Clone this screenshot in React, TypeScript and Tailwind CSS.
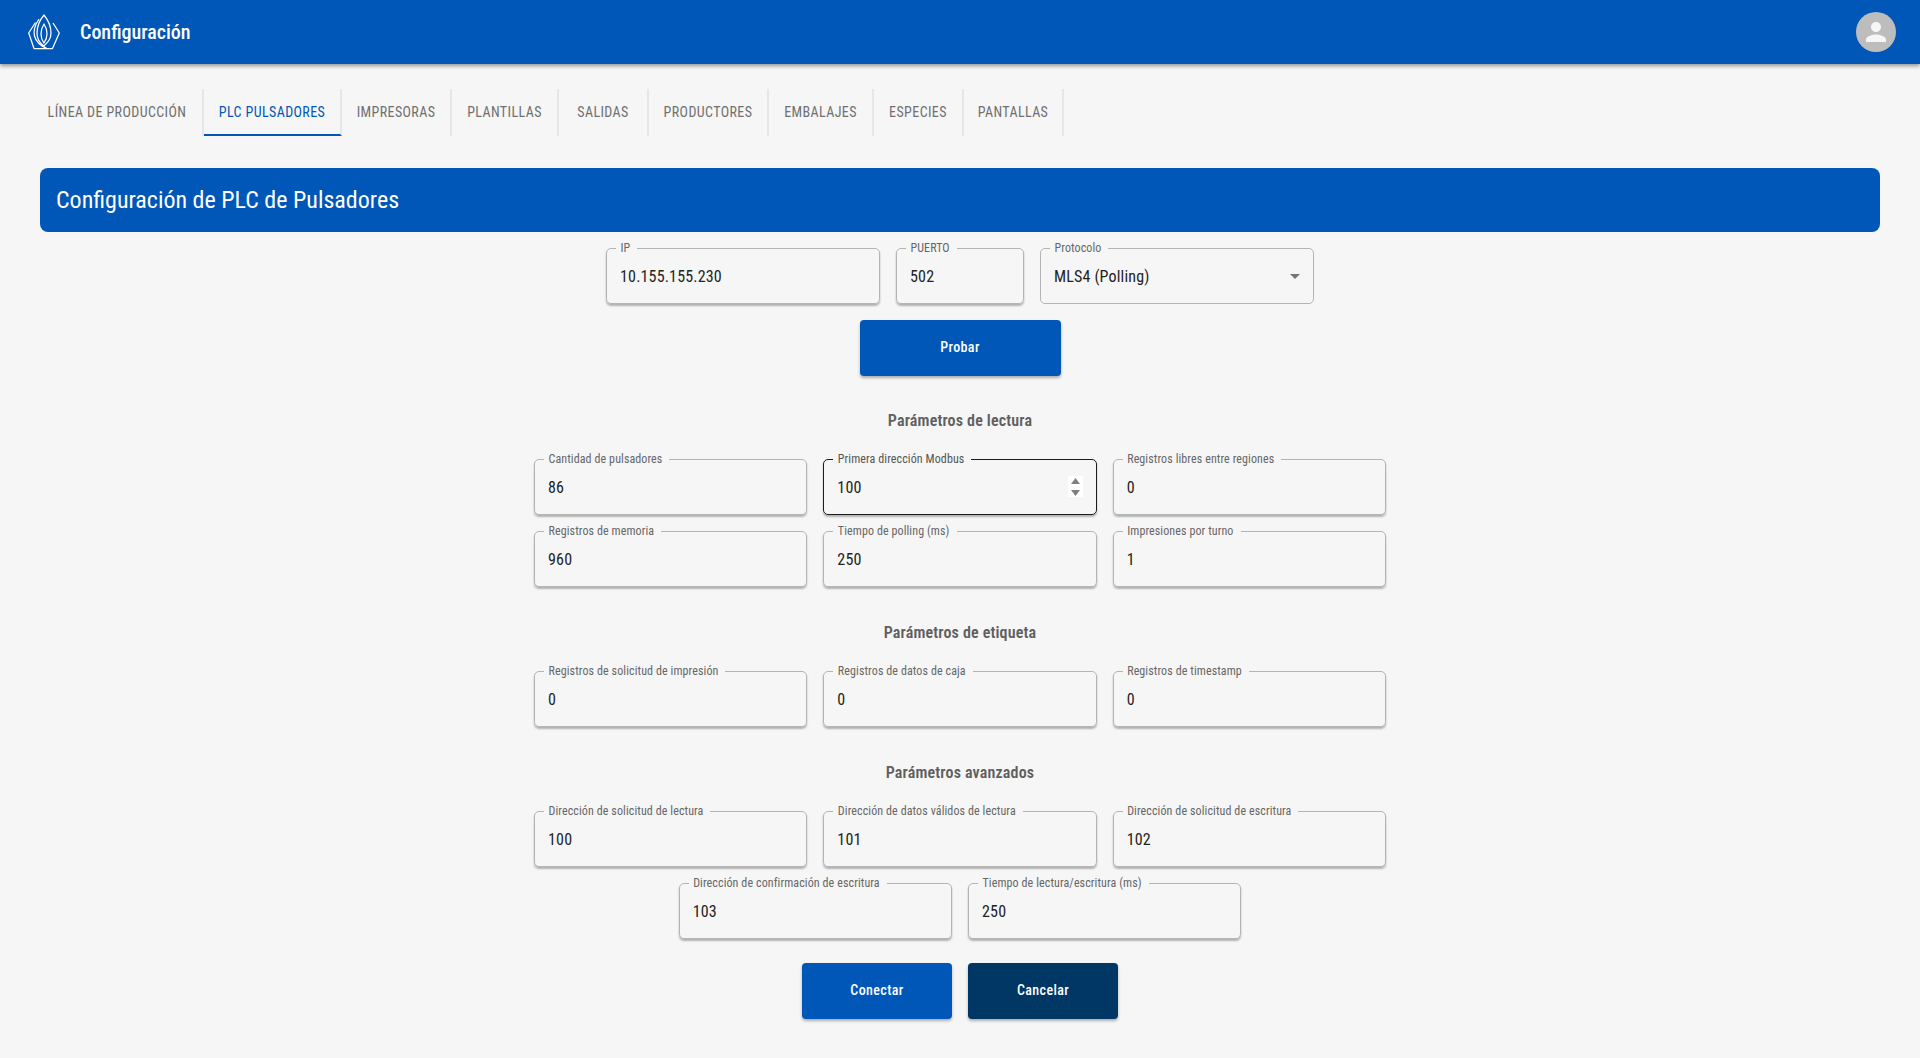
import React from "react";

const tabs = [
  { label: "LÍNEA DE PRODUCCIÓN", width: "w-[172px]" },
  { label: "PLC PULSADORES", width: "w-[138px]", active: true },
  { label: "IMPRESORAS", width: "w-[110px]" },
  { label: "PLANTILLAS", width: "w-[107px]" },
  { label: "SALIDAS", width: "w-[90px]" },
  { label: "PRODUCTORES", width: "w-[120px]" },
  { label: "EMBALAJES", width: "w-[105px]" },
  { label: "ESPECIES", width: "w-[90px]" },
  { label: "PANTALLAS", width: "w-[100px]" },
];

function Logo() {
  return (
    <svg viewBox="0 0 32 36" className="h-9 w-8" fill="none" stroke="white" strokeWidth="1.25" strokeLinejoin="round">
      <path d="M7.5 8.5 0.7 19 6 34.5H24.5L31.3 19 25 9" />
      <path d="M16 1C11 7 9 13 9 19C9 26 13 30 16 32C20 28 23 25 23 19C23 13 20 6 16 1Z" />
      <path d="M16 10C13.5 14 13 17 13 20C13 24 14.5 27 16 29C18 26 19 23 19 20C19 17 18 13 16 10Z" />
      <path d="M11 5C7 11 5 16 6.5 22C8 28 13 32 19 34.5" />
    </svg>
  );
}

function Field({ label, value, width = "w-[273.33px]", focused, plain, children }: {
  label: string;
  value: string;
  width?: string;
  focused?: boolean;
  plain?: boolean;
  children?: React.ReactNode;
}) {
  return (
    <div
      className={`relative h-14 rounded-[5px] border ${width} ${focused ? "border-[#1c1c1c]" : "border-[#b4b4b4]"} ${plain ? "" : "shadow-[0_2px_2px_rgba(0,0,0,0.28)]"}`}
    >
      <label className={`absolute -top-[9px] left-[9px] bg-[#f6f6f6] pl-[4.5px] pr-[7px] text-xs leading-4 tracking-[0.1px] whitespace-nowrap ${focused ? "text-[#555]" : "text-[#666]"}`}>
        {label}
      </label>
      <input
        readOnly
        value={value}
        className="h-full w-full bg-transparent pl-[13px] pr-8 text-base tracking-[0.17px] text-[#222] outline-none [font-stretch:87%]"
      />
      {children}
    </div>
  );
}

function Section({ title, first }: { title: string; first?: boolean }) {
  return (
    <h2 className={`h-6 text-center text-base leading-6 font-semibold tracking-[0.17px] text-[#5f5f5f] ${first ? "mt-[33px] mb-[26px]" : "mt-[34px] mb-[26px]"}`}>
      {title}
    </h2>
  );
}

export default function App() {
  return (
    <div className="min-h-[1058px] bg-[#f6f6f6] font-['Roboto',sans-serif] [font-stretch:87%]">
      <header className="flex h-16 items-center justify-between bg-[#0057b8] pr-6 pl-7 shadow-[0_2px_4px_rgba(0,0,0,0.4)]">
        <div className="flex items-center gap-5">
          <Logo />
          <h1 className="text-xl font-medium text-white">Configuración</h1>
        </div>
        <div className="flex h-10 w-10 items-center justify-center rounded-full bg-[#bdbdbd]">
          <svg viewBox="0 0 24 24" className="h-[30px] w-[30px]" fill="#f6f6f6">
            <path d="M12 12c2.21 0 4-1.79 4-4s-1.79-4-4-4-4 1.79-4 4 1.79 4 4 4zm0 2c-2.67 0-8 1.34-8 4v2h16v-2c0-2.66-5.33-4-8-4z" />
          </svg>
        </div>
      </header>

      <nav className="mt-[25px] flex h-[47px] pl-8">
        {tabs.map((tab) => (
          <div
            key={tab.label}
            className={`flex shrink-0 items-center justify-center border-r-2 border-[#e6e6e6] text-sm tracking-[0.4px] ${tab.width} ${tab.active ? "border-b-2 border-b-[#0057b8] text-[#0057b8]" : "pb-[2px] text-[#707070]"}`}
          >
            {tab.label}
          </div>
        ))}
      </nav>

      <main className="flex flex-col items-center px-10">
        <div className="mt-8 flex h-16 w-full items-center rounded-lg bg-[#0057b8] px-4">
          <h2 className="text-2xl font-[450] text-white [font-stretch:86%]">Configuración de PLC de Pulsadores</h2>
        </div>

        <div className="mt-4 flex gap-4">
          <Field label="IP" value="10.155.155.230" width="w-[274px]" />
          <Field label="PUERTO" value="502" width="w-[128px]" />
          <Field label="Protocolo" value="MLS4 (Polling)" width="w-[274px]" plain>
            <svg viewBox="0 0 10 5" className="absolute top-[25px] right-[13px] h-[5px] w-[10px]" fill="#757575">
              <path d="M0 0H10L5 5Z" />
            </svg>
          </Field>
        </div>

        <button className="mt-4 h-14 w-[201px] rounded bg-[#0057b8] pb-[2px] text-sm font-medium tracking-[0.4px] text-white shadow-[0_2px_3px_rgba(0,0,0,0.3)] [font-stretch:87%]">
          Probar
        </button>

        <Section title="Parámetros de lectura" first />
        <div className="grid w-[852px] grid-cols-3 gap-4">
          <Field label="Cantidad de pulsadores" value="86" />
          <Field label="Primera dirección Modbus" value="100" focused>
            <div className="absolute top-[16px] right-[13px] flex h-[21px] w-[15px] flex-col items-center justify-center gap-[6px] bg-white">
              <svg viewBox="0 0 9 6" className="h-[6px] w-[9px]" fill="#808080"><path d="M4.5 0 9 6H0Z" /></svg>
              <svg viewBox="0 0 9 6" className="h-[6px] w-[9px]" fill="#808080"><path d="M0 0H9L4.5 6Z" /></svg>
            </div>
          </Field>
          <Field label="Registros libres entre regiones" value="0" />
          <Field label="Registros de memoria" value="960" />
          <Field label="Tiempo de polling (ms)" value="250" />
          <Field label="Impresiones por turno" value="1" />
        </div>

        <Section title="Parámetros de etiqueta" />
        <div className="grid w-[852px] grid-cols-3 gap-4">
          <Field label="Registros de solicitud de impresión" value="0" />
          <Field label="Registros de datos de caja" value="0" />
          <Field label="Registros de timestamp" value="0" />
        </div>

        <Section title="Parámetros avanzados" />
        <div className="grid w-[852px] grid-cols-3 gap-4">
          <Field label="Dirección de solicitud de lectura" value="100" />
          <Field label="Dirección de datos válidos de lectura" value="101" />
          <Field label="Dirección de solicitud de escritura" value="102" />
        </div>
        <div className="mt-4 flex gap-4">
          <Field label="Dirección de confirmación de escritura" value="103" />
          <Field label="Tiempo de lectura/escritura (ms)" value="250" />
        </div>

        <div className="mt-6 flex gap-4">
          <button className="h-14 w-[150px] rounded bg-[#0057b8] pb-[3px] text-sm font-medium tracking-[0.4px] text-white shadow-[0_2px_3px_rgba(0,0,0,0.3)] [font-stretch:87%]">
            Conectar
          </button>
          <button className="h-14 w-[150px] rounded bg-[#003764] pb-[3px] text-sm font-medium tracking-[0.4px] text-white shadow-[0_2px_3px_rgba(0,0,0,0.3)] [font-stretch:87%]">
            Cancelar
          </button>
        </div>
      </main>
    </div>
  );
}
